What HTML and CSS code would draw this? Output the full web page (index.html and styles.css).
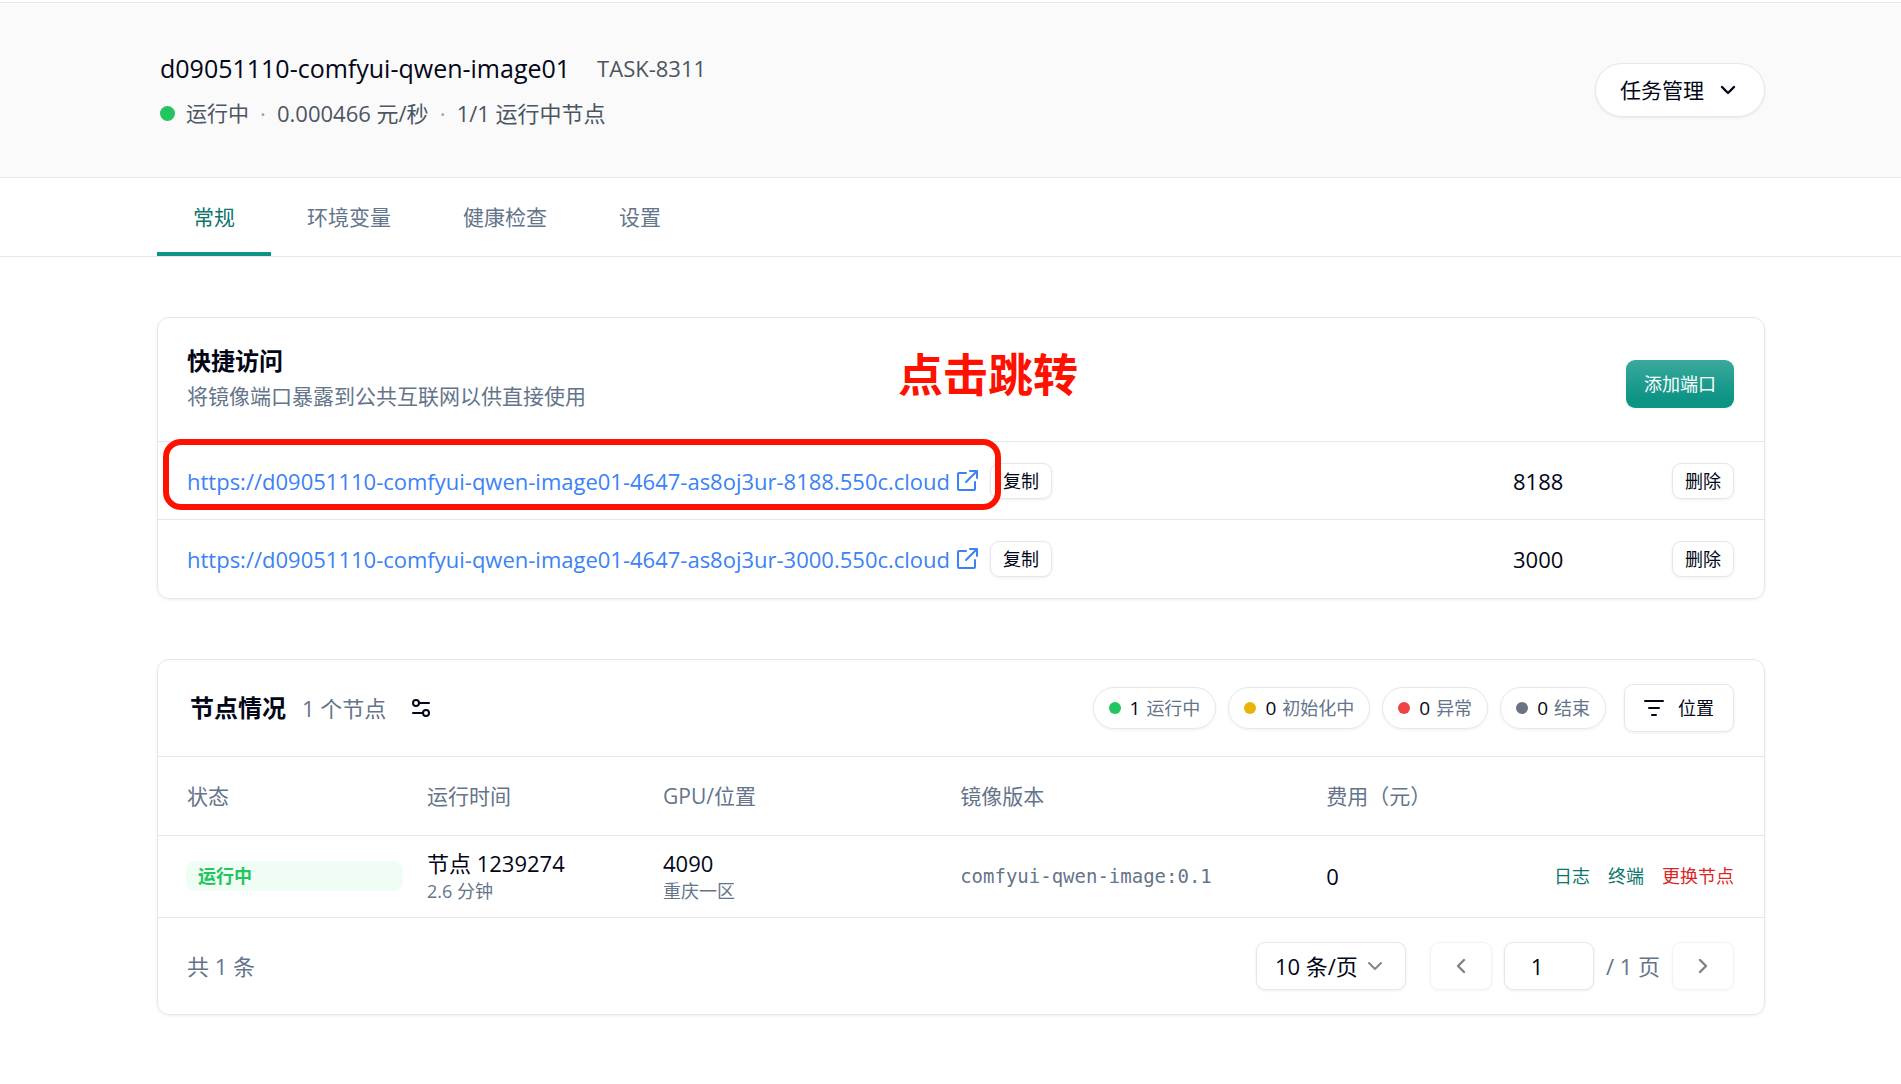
FILE: index.html
```html
<!DOCTYPE html>
<html lang="zh-CN">
<head>
<meta charset="utf-8">
<meta name="viewport" content="width=device-width, initial-scale=1">
<title>d09051110-comfyui-qwen-image01</title>
<link rel="stylesheet" href="styles.css">
</head>
<body>
<header class="page-header">
  <div class="container header-row">
    <div class="header-info">
      <div class="title-row">
        <h1 class="task-name">d09051110-comfyui-qwen-image01</h1>
        <span class="task-id">TASK-8311</span>
      </div>
      <div class="status-row">
        <span class="dot dot-lg green"></span>
        <span class="state">运行中</span>
        <span class="sep">·</span>
        <span>0.000466 元/秒</span>
        <span class="sep">·</span>
        <span>1/1 运行中节点</span>
      </div>
    </div>
    <button class="btn manage" type="button">任务管理
      <svg class="icon" width="24" height="24" viewBox="0 0 24 24"><path d="M6 9l6 6 6-6" stroke-width="2.4"/></svg>
    </button>
  </div>
</header>

<nav class="tabs">
  <div class="container tab-list">
    <a class="tab active" href="#general">常规</a>
    <a class="tab" href="#env">环境变量</a>
    <a class="tab" href="#health">健康检查</a>
    <a class="tab" href="#settings">设置</a>
  </div>
</nav>

<main class="container content">
  <section class="card access">
    <div class="card-head access-head">
      <div>
        <h2 class="card-title">快捷访问</h2>
        <p class="card-desc">将镜像端口暴露到公共互联网以供直接使用</p>
      </div>
      <button class="btn primary" type="button">添加端口</button>
    </div>
    <table class="ports">
      <colgroup><col class="c-url"><col class="c-port"><col class="c-del"></colgroup>
      <tbody>
        <tr>
          <td><div class="url-cell">
            <a class="url" href="#port-8188">https://d09051110-comfyui-qwen-image01-4647-as8oj3ur-8188.550c.cloud
              <svg class="icon" width="24" height="24" viewBox="0 0 24 24"><path d="M11 4H4a1 1 0 0 0-1 1v15a1 1 0 0 0 1 1h15a1 1 0 0 0 1-1v-7M15 2h7v7M22 2L11 13" stroke-width="2"/></svg></a>
            <button class="btn small" type="button">复制</button>
          </div></td>
          <td>8188</td>
          <td class="end"><button class="btn small" type="button">删除</button></td>
        </tr>
        <tr>
          <td><div class="url-cell">
            <a class="url" href="#port-3000">https://d09051110-comfyui-qwen-image01-4647-as8oj3ur-3000.550c.cloud
              <svg class="icon" width="24" height="24" viewBox="0 0 24 24"><path d="M11 4H4a1 1 0 0 0-1 1v15a1 1 0 0 0 1 1h15a1 1 0 0 0 1-1v-7M15 2h7v7M22 2L11 13" stroke-width="2"/></svg></a>
            <button class="btn small" type="button">复制</button>
          </div></td>
          <td>3000</td>
          <td class="end"><button class="btn small" type="button">删除</button></td>
        </tr>
      </tbody>
    </table>
    <div class="callout-box"></div>
    <strong class="callout-text">点击跳转</strong>
  </section>

  <section class="card">
    <div class="card-head nodes-head">
      <h2 class="card-title">节点情况</h2>
      <span class="node-count">1 个节点</span>
      <button class="bare" type="button" aria-label="列设置">
        <svg class="icon" width="22" height="22" viewBox="0 0 22 22"><g stroke-width="2"><circle cx="6" cy="6" r="3"/><path d="M9 6h10"/><circle cx="16" cy="16" r="3"/><path d="M3 16h10"/></g></svg>
      </button>
      <ul class="pills">
        <li class="pill"><span class="dot green"></span><b>1</b>运行中</li>
        <li class="pill"><span class="dot yellow"></span><b>0</b>初始化中</li>
        <li class="pill"><span class="dot red"></span><b>0</b>异常</li>
        <li class="pill"><span class="dot gray"></span><b>0</b>结束</li>
      </ul>
      <button class="btn filter" type="button">
        <svg class="icon" width="20" height="20" viewBox="0 0 20 20"><path d="M1 3h18M5 10h10M8 17h4" stroke-width="2"/></svg>位置</button>
    </div>
    <table class="nodes">
      <colgroup><col class="n-state"><col class="n-time"><col class="n-gpu"><col class="n-image"><col class="n-cost"><col></colgroup>
      <thead>
        <tr><th>状态</th><th>运行时间</th><th>GPU/位置</th><th>镜像版本</th><th>费用（元）</th><th></th></tr>
      </thead>
      <tbody>
        <tr>
          <td class="state-cell"><div class="badge">运行中</div></td>
          <td><div>节点 1239274</div><div class="sub">2.6 分钟</div></td>
          <td><div>4090</div><div class="sub">重庆一区</div></td>
          <td class="image">comfyui-qwen-image:0.1</td>
          <td>0</td>
          <td><div class="actions"><a href="#log">日志</a><a href="#terminal">终端</a><a class="danger" href="#replace">更换节点</a></div></td>
        </tr>
      </tbody>
    </table>
    <div class="pager">
      <span class="total">共 1 条</span>
      <div class="size-select">
        <select class="field" aria-label="每页条数"><option>10 条/页</option></select>
        <svg class="icon" width="24" height="24" viewBox="0 0 24 24"><path d="M6 9l6 6 6-6" stroke-width="2"/></svg>
      </div>
      <button class="btn page-btn" type="button" aria-label="上一页" disabled><svg class="icon" width="24" height="24" viewBox="0 0 24 24"><path d="M15 6l-6 6 6 6" stroke-width="2.4"/></svg></button>
      <input class="field page-input" type="text" value="1" aria-label="页码">
      <span class="page-total">/ 1 页</span>
      <button class="btn page-btn" type="button" aria-label="下一页" disabled><svg class="icon" width="24" height="24" viewBox="0 0 24 24"><path d="M9 6l6 6-6 6" stroke-width="2.4"/></svg></button>
    </div>
  </section>
</main>
</body>
</html>
```
FILE: styles.css
```css
:root {
  --line: #e2e8f0;
  --ink: #020617;
  --muted: #64748b;
  --teal: #0d9484;
  --shadow: 0 1px 3px rgba(15, 23, 42, 0.07);
}
*, *::before, *::after { box-sizing: border-box; }
body {
  margin: 0;
  background: #fff;
  color: var(--ink);
  font: 400 22px/30px "Open Sans", "Noto Sans CJK SC", sans-serif;
}
h1, h2, p, ul { margin: 0; padding: 0; }
a { text-decoration: none; }
button, input, select { font: inherit; color: inherit; margin: 0; }
.icon { display: block; flex: none; fill: none; stroke: currentColor; stroke-linecap: round; stroke-linejoin: round; }
.container { padding: 0 136px 0 157px; }

.page-header {
  margin-top: 2px;
  border-top: 1px solid var(--line);
  border-bottom: 1px solid #e5e7eb;
  background: #fafafa;
}
.header-row { display: flex; justify-content: space-between; padding-top: 48px; padding-bottom: 48px; }
.header-info { padding-left: 3px; color: #4b5563; }
.title-row { display: flex; align-items: center; gap: 27px; height: 34px; }
.task-name { color: var(--ink); font-size: 25px; line-height: 34px; font-weight: 400; }
.status-row { display: flex; align-items: center; height: 44px; padding-top: 12px; }
.status-row .state { margin-left: 11px; font-size: 21px; }
.sep { width: 28px; text-align: center; color: #94a3b8; }
.dot { width: 12px; height: 12px; border-radius: 50%; flex: none; }
.dot-lg { width: 15px; height: 15px; }
.green { background: #22c55e; }
.yellow { background: #eab308; }
.red { background: #ef4444; }
.gray { background: #6b7280; }

.btn {
  display: inline-flex;
  align-items: center;
  justify-content: center;
  border: 1px solid var(--line);
  border-radius: 9px;
  background: #fff;
  box-shadow: var(--shadow);
  font-size: 18px;
  line-height: 26px;
  padding: 0;
}
.manage { height: 54px; margin-top: 12px; gap: 12px; padding: 0 24px; border-radius: 27px; font-size: 21px; }
.primary { width: 108px; height: 48px; border: 0; color: #fff; background: linear-gradient(#3aa99c, #0d9484 80%); }
.small { width: 62px; height: 36px; }

.tabs { border-bottom: 1px solid #e5e7eb; }
.tab-list { display: flex; }
.tab { padding: 24px 36px 20px; border-bottom: 4px solid transparent; color: var(--muted); font-size: 21px; }
.tab.active { color: #0f766e; border-color: var(--teal); }

.content { display: flex; flex-direction: column; gap: 60px; padding-top: 60px; padding-bottom: 60px; }
.card { border: 1px solid var(--line); border-radius: 12px; box-shadow: var(--shadow); }
.card-head { display: flex; align-items: center; padding: 0 30px 0 29px; }
.card-title { font-size: 24px; line-height: 36px; font-weight: 700; }

.access { position: relative; }
.access-head { justify-content: space-between; height: 123px; padding-top: 8px; }
.card-desc { color: var(--muted); font-size: 21px; line-height: 34px; padding-bottom: 12px; }
table { width: 100%; border-collapse: collapse; table-layout: fixed; }
td, th { padding: 0 12px; text-align: left; font-weight: 400; border-top: 1px solid var(--line); }
td:first-child, th:first-child { padding-left: 29px; }
td:last-child, th:last-child { padding-right: 30px; }
.ports tr { height: 78px; }
.c-port { width: 171px; }
.c-del { width: 92px; }
.ports .end { padding-left: 0; }
.url-cell { display: flex; align-items: center; gap: 11px; }
.url { display: flex; align-items: center; gap: 5px; color: #3b82f6; white-space: nowrap; }
.callout-box { position: absolute; left: 5px; top: 121px; width: 838px; height: 71px; border: 6px solid #ff1100; border-radius: 18px; pointer-events: none; }
.callout-text { position: absolute; left: 740px; top: 27px; color: #ff1100; font-size: 45px; line-height: 60px; font-weight: 700; }

.nodes-head { height: 96px; padding-left: 32px; }
.node-count { margin-left: 16px; color: var(--muted); }
.bare { border: 0; background: none; padding: 0; margin-left: 24px; }
.pills { display: flex; gap: 12px; margin-left: auto; margin-right: 18px; list-style: none; }
.pill { display: flex; align-items: center; height: 42px; padding: 0 15px; border: 1px solid var(--line); border-radius: 21px; box-shadow: var(--shadow); color: var(--muted); font-size: 18px; }
.pill b { margin: 0 6px 0 9px; color: var(--ink); font-size: 19px; font-weight: 400; }
.filter { width: 110px; height: 48px; gap: 14px; }

.n-state { width: 16%; }
.n-time { width: 14.7%; }
.n-gpu { width: 18.5%; }
.n-image { width: 22.8%; }
.n-cost { width: 10%; }
.nodes th { height: 79px; color: var(--muted); font-size: 21px; }
.nodes td { height: 82px; }
.nodes .state-cell { padding-left: 28px; }
.badge { border-radius: 9px; padding: 0 12px; background: #f0fdf4; color: #22c55e; font-size: 18px; line-height: 30px; font-weight: 700; }
.sub { color: var(--muted); font-size: 18px; line-height: 27px; }
.nodes .image { color: var(--muted); font-family: "DejaVu Sans Mono", monospace; font-size: 19px; }
.actions { display: flex; justify-content: flex-end; gap: 18px; font-size: 18px; white-space: nowrap; }
.actions a { color: #0f766e; }
.actions .danger { color: #dc2626; }

.pager { display: flex; align-items: center; height: 97px; padding: 0 30px 0 29px; border-top: 1px solid var(--line); }
.total, .page-total { color: var(--muted); }
.total { margin-right: auto; }
.field { height: 48px; border: 1px solid var(--line); border-radius: 9px; background: #fff; box-shadow: var(--shadow); }
.size-select { position: relative; width: 150px; margin-right: 24px; }
.size-select .field { width: 100%; padding: 0 18px; appearance: none; }
.size-select .icon { position: absolute; right: 19px; top: 12px; color: #808692; pointer-events: none; }
.page-btn { width: 62px; height: 48px; }
.page-btn:disabled { opacity: 0.5; color: var(--ink); }
.page-input { width: 90px; margin-left: 12px; padding: 0 24px 0 0; text-align: center; }
.page-total { margin: 0 12px; }
```
